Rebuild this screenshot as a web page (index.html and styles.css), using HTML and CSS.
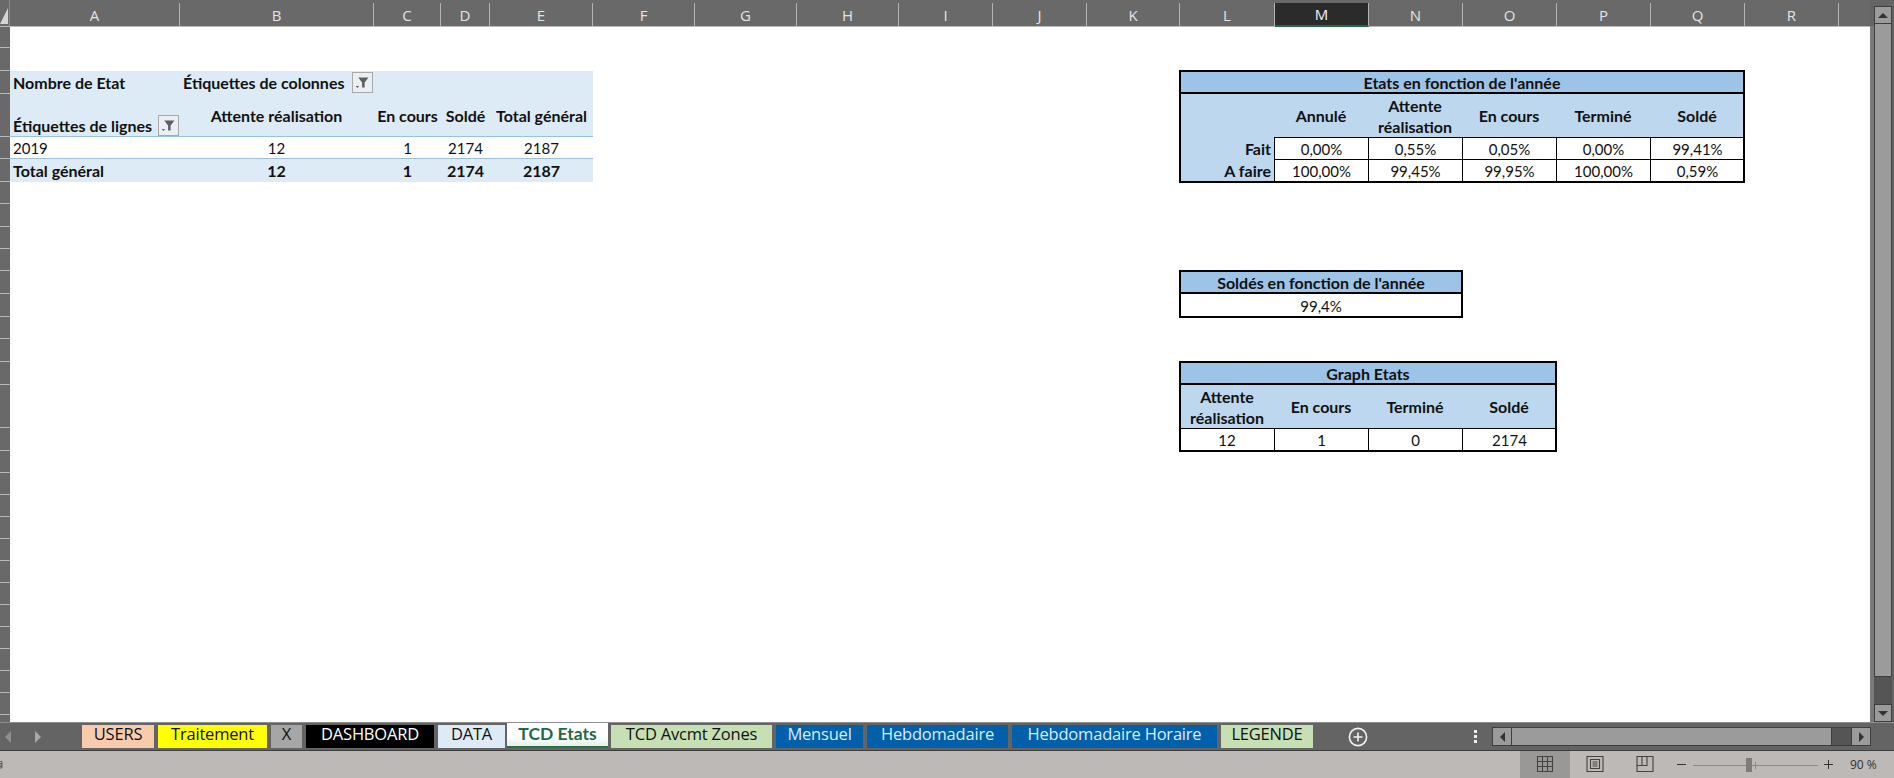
FILE: index.html
```html
<!DOCTYPE html>
<html lang="fr">
<head>
<meta charset="utf-8">
<title>TCD Etats</title>
<link rel="stylesheet" href="styles.css">
</head>
<body>
<div class="app">
  <div class="upper">
    <div class="left">
      <div class="colbar">
        <div class="corner"><span class="corner-tri"></span></div>
        <div class="colh w170">A</div><div class="colh w194">B</div><div class="colh w67">C</div><div class="colh w49">D</div><div class="colh w103">E</div>
        <div class="colh w102">F</div><div class="colh w102">G</div><div class="colh w102">H</div><div class="colh w94">I</div><div class="colh w94">J</div><div class="colh w93">K</div>
        <div class="colh w95">L</div><div class="colh w94 sel">M</div><div class="colh w94">N</div><div class="colh w94">O</div><div class="colh w94">P</div><div class="colh w94">Q</div><div class="colh w94">R</div>
        <div class="colh-rest"></div>
      </div>
      <div class="main">
        <div class="rowhead">
          <i class="rh h21"></i><i class="rh h23"></i><i class="rh h23"></i><i class="rh h43"></i><i class="rh h22"></i><i class="rh h23"></i><i class="rh h22"></i><i class="rh h23"></i><i class="rh h22"></i><i class="rh h22"></i><i class="rh h23"></i><i class="rh h23"></i><i class="rh h22"></i><i class="rh h23"></i><i class="rh h23"></i><i class="rh h43"></i><i class="rh h23"></i><i class="rh h22"></i><i class="rh h22"></i><i class="rh h22"></i><i class="rh h22"></i><i class="rh h22"></i><i class="rh h22"></i><i class="rh h22"></i><i class="rh h22"></i><i class="rh h22"></i><i class="rh h22"></i><i class="rh h22"></i><i class="rh h22"></i><i class="rh h22"></i>
        </div>
        <div class="sheet">
          <div class="pivot">
            <div class="pv p-top">Nombre de Etat</div>
            <div class="pv p-top p-span">Étiquettes de colonnes
              <span class="fbtn"><svg class="fico" viewBox="0 0 20 20"><path d="M5 4h12l-4.500 6v6h-3v-6z"/><path d="M2 14h4l-2 2.500z"/></svg></span>
            </div>
            <div class="pv p-top"></div><div class="pv p-top"></div><div class="pv p-top"></div>
            <div class="pv p-head p-lab">Étiquettes de lignes
              <span class="fbtn fbtn-b"><svg class="fico" viewBox="0 0 20 20"><path d="M5 4h12l-4.500 6v6h-3v-6z"/><path d="M2 14h4l-2 2.500z"/></svg></span>
            </div>
            <div class="pv p-head c">Attente réalisation</div><div class="pv p-head c">En cours</div><div class="pv p-head c">Soldé</div><div class="pv p-head c">Total général</div>
            <div class="pv p-data">2019</div><div class="pv p-data c">12</div><div class="pv p-data c">1</div><div class="pv p-data c">2174</div><div class="pv p-data c">2187</div>
            <div class="pv p-tot">Total général</div><div class="pv p-tot c">12</div><div class="pv p-tot c">1</div><div class="pv p-tot c">2174</div><div class="pv p-tot c">2187</div>
          </div>

          <div class="box t1">
            <div class="title span6">Etats en fonction de l'année</div>
            <div class="hd"></div><div class="hd">Annulé</div><div class="hd">Attente<br>réalisation</div><div class="hd">En cours</div><div class="hd">Terminé</div><div class="hd">Soldé</div>
            <div class="lab">Fait</div><div class="val">0,00%</div><div class="val">0,55%</div><div class="val">0,05%</div><div class="val">0,00%</div><div class="val">99,41%</div>
            <div class="lab">A faire</div><div class="val">100,00%</div><div class="val">99,45%</div><div class="val">99,95%</div><div class="val">100,00%</div><div class="val">0,59%</div>
          </div>

          <div class="box t2">
            <div class="title">Soldés en fonction de l'année</div>
            <div class="val plain">99,4%</div>
          </div>

          <div class="box t3">
            <div class="title span4">Graph Etats</div>
            <div class="hd">Attente<br>réalisation</div><div class="hd">En cours</div><div class="hd">Terminé</div><div class="hd">Soldé</div>
            <div class="val first">12</div><div class="val">1</div><div class="val">0</div><div class="val">2174</div>
          </div>
        </div>
      </div>
    </div>
    <div class="vscroll">
      <div class="sbtn"><span class="tri-up"></span></div>
      <div class="vthumb"></div>
      <div class="vtrack"></div>
      <div class="sbtn"><span class="tri-down"></span></div>
    </div>
  </div>

  <div class="tabbar">
    <div class="tabnav"><span class="nav-l"></span><span class="nav-r"></span></div>
    <div class="tabs">
      <div class="tab t-users">USERS</div>
      <div class="tab t-trait">Traitement</div>
      <div class="tab t-x">X</div>
      <div class="tab t-dash">DASHBOARD</div>
      <div class="tab t-data">DATA</div>
      <div class="tab t-active">TCD Etats</div>
      <div class="tab t-avc">TCD Avcmt Zones</div>
      <div class="tab t-blue t-men">Mensuel</div>
      <div class="tab t-blue t-heb">Hebdomadaire</div>
      <div class="tab t-blue t-hor">Hebdomadaire Horaire</div>
      <div class="tab t-leg">LEGENDE</div>
    </div>
    <svg class="plus" viewBox="0 0 20 20"><circle cx="10" cy="10" r="8.600"/><path d="M10 5.500v9M5.500 10h9"/></svg>
    <div class="dots"><i></i><i></i><i></i></div>
    <div class="hscroll">
      <div class="hbtn"><span class="tri-left"></span></div>
      <div class="hthumb"></div>
      <div class="htrack"></div>
      <div class="hbtn"><span class="tri-right"></span></div>
    </div>
  </div>

  <div class="status">
    <svg class="macro" viewBox="0 0 10 20"><path d="M-4 3h8v13h-8M0 7h4M0 10h4M0 13h4"/></svg>
    <div class="view view-on"><svg class="vi" viewBox="0 0 18 18"><path d="M1.500 1.500h15v15h-15zM1.500 6.500h15M1.500 11.500h15M6.500 1.500v15M11.500 1.500v15"/></svg></div>
    <div class="view"><svg class="vi" viewBox="0 0 18 18"><path d="M1 1.500h16v15h-16zM4.500 4.500h9v9h-9zM6.500 7h5M6.500 9h5M6.500 11h5"/></svg></div>
    <div class="view"><svg class="vi" viewBox="0 0 18 18"><path d="M1 1.500h16v15h-16zM1 10.500h10v-9M6 1.500v9"/></svg></div>
    <div class="zoom">
      <span class="zminus"></span>
      <div class="slider"><span class="zthumb"></span><span class="ztick"></span></div>
      <span class="zplus"></span>
      <span class="zpct">90 %</span>
    </div>
  </div>
</div>
</body>
</html>
```

FILE: styles.css
```css
* { box-sizing: border-box; }
html, body { margin: 0; padding: 0; background: #fff; }
body { width: 1894px; height: 778px; overflow: hidden; font-family: "Lato", "Liberation Sans", sans-serif; color: #111; }

.app { display: flex; flex-direction: column; width: 1894px; height: 778px; }
.upper { display: flex; height: 722px; }
.left { width: 1870px; display: flex; flex-direction: column; }

/* Column headers */
.colbar { display: flex; height: 27px; background: #696969; border-bottom: 1px solid #b9b9b9; padding-top: 3px; }
.corner { width: 10px; position: relative; border-right: 1px solid #8c8c8c; margin-top: -3px; }
.corner-tri { position: absolute; left: 0; top: 8px; width: 8px; height: 16px; background: #d4d4d4; clip-path: polygon(100% 0, 100% 100%, 0 100%); }
.colh { display: flex; align-items: center; justify-content: center; border-right: 1px solid #b4b4b4; color: #e4e4e4; font: 15px "Open Sans", "Liberation Sans", sans-serif; }
.colh.sel { background: #2b2b2b; color: #f2f2f2; border-bottom: 2px solid #1f6b45; margin-bottom: -1px; }
.colh-rest { flex: 1; }
.w170 { width: 170px; } .w194 { width: 194px; } .w67 { width: 67px; } .w49 { width: 49px; } .w103 { width: 103px; }
.w102 { width: 102px; } .w94 { width: 94px; } .w93 { width: 93px; } .w95 { width: 95px; }

/* Main area */
.main { display: flex; height: 695px; }
.rowhead { width: 10px; display: flex; flex-direction: column; background: #696969; overflow: hidden; }
.rh { display: block; flex: none; border-bottom: 1px solid #b9b9b9; }
.h21 { height: 21px; } .h22 { height: 22px; } .h23 { height: 23px; } .h43 { height: 43px; }

.sheet {
  flex: 1; background: #fff; display: grid;
  grid-template-columns: 169px 195px 67px 49px 103px 102px 102px 102px 94px 94px 93px repeat(7, 94px) 1fr;
  grid-template-rows: 21px 23px 23px 43px 22px 23px 22px 23px 22px 22px 23px 23px 22px 23px 23px 43px 23px;
  align-content: start;
}

/* Pivot */
.pivot { grid-column: 1 / 6; grid-row: 3 / 7; display: grid; grid-template-columns: 169px 195px 67px 49px 103px; grid-template-rows: 23px 43px 22px 23px; font-size: 15px; }
.pv { display: flex; align-items: center; padding-left: 3px; white-space: nowrap; }
.c { justify-content: center; padding-left: 0; }
.p-top { background: #ddebf7; font-weight: 700; font-size: 16px; }
.p-span { position: relative; padding-left: 4px; }
.p-head { background: #ddebf7; font-weight: 700; font-size: 16px; border-bottom: 1px solid #9bc2e6; }
.p-lab { align-items: flex-end; padding-bottom: 1px; position: relative; }
.p-data { background: #fff; border-bottom: 1px solid #9bc2e6; padding-top: 1px; }
.p-tot { background: #ddebf7; font-weight: 700; font-size: 16px; }
.fbtn { position: absolute; right: 1px; top: 1px; width: 21px; height: 21px; background: #e9eff5; border: 1px solid #a9a9a9; display: flex; align-items: center; justify-content: center; }
.fbtn-b { top: 21px; right: 0; }
.fico { width: 17px; height: 17px; fill: #5f5f5f; }

/* Summary tables */
.box { display: grid; outline: 2px solid #000; outline-offset: -1px; font-size: 15px; text-align: center; }
.t1 { grid-column: 12 / 18; grid-row: 3 / 7; grid-template-columns: repeat(6, 94px); grid-template-rows: 23px 43px 22px 23px; }
.t2 { grid-column: 12 / 15; grid-row: 11 / 13; grid-template-columns: 1fr; grid-template-rows: 23px 23px; }
.t3 { grid-column: 12 / 16; grid-row: 15 / 18; grid-template-columns: repeat(4, 94px); grid-template-rows: 23px 43px 23px; }
.title { background: #9dc3e6; font-weight: 700; font-size: 16px; border-bottom: 2px solid #000; padding-top: 2px; display: flex; align-items: center; justify-content: center; }
.span6 { grid-column: 1 / 7; }
.span4 { grid-column: 1 / 5; }
.hd { background: #bdd7ee; font-weight: 700; font-size: 16px; display: flex; align-items: center; justify-content: center; line-height: 21px; }
.lab { background: #bdd7ee; font-weight: 700; font-size: 16px; display: flex; align-items: center; justify-content: flex-end; padding-right: 3px; }
.val { display: flex; align-items: center; justify-content: center; border-left: 1px solid #000; border-top: 1px solid #000; background: #fff; }
.val.plain { border: 0; }
.val.first { border-left: 0; }

/* Vertical scrollbar */
.vscroll { width: 24px; background: #646464; padding: 6px 2px 0 4px; display: flex; flex-direction: column; position: relative; }
.vscroll::before { content: ""; position: absolute; left: 0; top: 26px; bottom: 0; width: 4px; background: #7a7a7a; }
.sbtn { height: 18px; flex: none; background: #9b9b9b; border: 1px solid #3e3e3e; display: flex; align-items: center; justify-content: center; }
.vthumb { height: 653px; background: #9b9b9b; border: 1px solid #3e3e3e; border-top: 0; flex: none; }
.vtrack { flex: 1; background: #555; }
.tri-up { border: 5px solid transparent; border-top: 0; border-bottom: 5px solid #333; }
.tri-down { border: 5px solid transparent; border-bottom: 0; border-top: 5px solid #333; }
.tri-left { border: 5px solid transparent; border-left: 0; border-right: 5px solid #333; }
.tri-right { border: 5px solid transparent; border-right: 0; border-left: 5px solid #333; }

/* Tab bar */
.tabbar { height: 29px; background: #646464; border-top: 1px solid #8d8d8d; border-bottom: 1px solid #3c3c3c; display: flex; align-items: flex-start; padding-top: 2px; position: relative; }
.tabnav { width: 82px; height: 23px; flex: none; display: flex; align-items: center; padding-left: 5px; gap: 24px; }
.nav-l { border: 6px solid transparent; border-left: 0; border-right: 6px solid #8e8e8e; }
.nav-r { border: 6px solid transparent; border-right: 0; border-left: 6px solid #a8a8a8; }
.tabs { display: flex; gap: 4px; height: 23px; width: 1231px; flex: none; }
.tab { height: 23px; flex: none; display: flex; align-items: center; justify-content: center; font: 16.500px "Open Sans", "Liberation Sans", sans-serif; color: #111; white-space: nowrap; letter-spacing: -0.2px; padding-bottom: 7px; }
.t-users { width: 72px; background: #f8cbad; }
.t-trait { width: 109px; background: #ffff00; }
.t-x { width: 31px; background: #a6a6a6; }
.t-dash { width: 128px; background: #000; color: #fff; }
.t-data { width: 67px; background: #ddebf7; }
.t-active { width: 101px; margin: -2px -1px 0 -2px; height: 25px; background: linear-gradient(#fff 60%, #e4efe8); border-bottom: 2px solid #217346; color: #1f6b45; font-weight: 700; font-family: "Lato", sans-serif; font-size: 17.500px; letter-spacing: 0; padding-bottom: 3px; }
.t-avc { width: 161px; background: #c6e0b4; }
.t-blue { background: #0060ac; color: #d9ecfb; }
.t-men { width: 87px; }
.t-heb { width: 141px; }
.t-hor { width: 205px; }
.t-leg { width: 92px; background: #c6e0b4; }
.plus { width: 20px; height: 20px; flex: none; margin-left: 35px; margin-top: 2px; fill: none; stroke: #f2f2f2; stroke-width: 1.600; }
.dots { position: absolute; left: 1474px; top: 7px; display: flex; flex-direction: column; gap: 2px; }
.dots i { display: block; width: 3px; height: 3px; background: #f0f0f0; }
.hscroll { position: absolute; left: 1492px; top: 4px; width: 379px; height: 19px; display: flex; border: 1px solid #3e3e3e; background: #555; }
.hbtn { width: 18px; flex: none; background: #9b9b9b; display: flex; align-items: center; justify-content: center; }
.hthumb { width: 321px; background: #9b9b9b; border: solid #3e3e3e; border-width: 0 1px; flex: none; }
.htrack { flex: 1; border-right: 1px solid #3e3e3e; }

/* Status bar */
.status { height: 27px; background: #bdb9b6; display: flex; align-items: stretch; }
.macro { width: 5px; height: 18px; align-self: center; fill: none; stroke: #333; stroke-width: 1.200; margin-right: 1515px; }
.view { width: 50px; display: flex; align-items: center; justify-content: center; padding-bottom: 1px; }
.view-on { background: #9a9896; }
.vi { width: 18px; height: 18px; fill: none; stroke: #444; stroke-width: 1.100; }
.zoom { position: relative; width: 224px; }
.zminus { position: absolute; left: 7px; top: 13px; width: 9px; height: 1px; background: #333; }
.slider { position: absolute; left: 23px; top: 14px; width: 125px; height: 1px; background: #8c8885; }
.zthumb { position: absolute; left: 53px; top: -7px; width: 6px; height: 14px; background: #807c7a; }
.ztick { position: absolute; left: 62px; top: -3px; width: 1px; height: 7px; background: #8c8885; }
.zplus { position: absolute; left: 154px; top: 9px; width: 9px; height: 9px; background: linear-gradient(#333, #333) center / 9px 1px no-repeat, linear-gradient(#333, #333) center / 1px 9px no-repeat; }
.zpct { position: absolute; left: 180px; top: 5px; font: 12px "Open Sans", "Liberation Sans", sans-serif; color: #333; white-space: nowrap; }
```
